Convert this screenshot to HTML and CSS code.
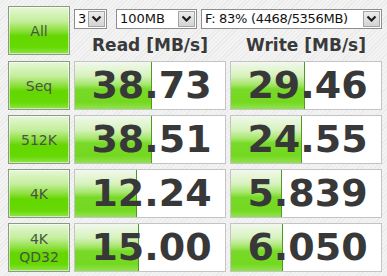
FILE: index.html
```html
<!DOCTYPE html>
<html>
<head>
<meta charset="utf-8">
<link rel="stylesheet" href="styles.css">
</head>
<body>
<div class="app">
  <div class="btn">All</div>
  <div class="top">
    <div class="selects">
      <div class="sel sel-count"><span class="sel-text">3</span><span class="arrow"><svg width="11" height="8" viewBox="0 0 11 8"><polyline points="1.5,1.5 5.5,5.5 9.5,1.5" fill="none" stroke="#1e1e1e" stroke-width="2.2"/></svg></span></div>
      <div class="sel sel-size"><span class="sel-text">100MB</span><span class="arrow"><svg width="11" height="8" viewBox="0 0 11 8"><polyline points="1.5,1.5 5.5,5.5 9.5,1.5" fill="none" stroke="#1e1e1e" stroke-width="2.2"/></svg></span></div>
      <div class="sel sel-drive"><span class="sel-text">F: 83% (4468/5356MB)</span><span class="arrow"><svg width="11" height="8" viewBox="0 0 11 8"><polyline points="1.5,1.5 5.5,5.5 9.5,1.5" fill="none" stroke="#1e1e1e" stroke-width="2.2"/></svg></span></div>
    </div>
    <div class="heads">
      <div class="head">Read [MB/s]</div>
      <div class="head">Write [MB/s]</div>
    </div>
  </div>

  <div class="btn">Seq</div>
  <div class="val" style="--w:77px">38.73</div>
  <div class="val" style="--w:74px">29.46</div>

  <div class="btn">512K</div>
  <div class="val" style="--w:77px">38.51</div>
  <div class="val" style="--w:71px">24.55</div>

  <div class="btn">4K</div>
  <div class="val" style="--w:62px">12.24</div>
  <div class="val" style="--w:51px">5.839</div>

  <div class="btn btn-two">4K<br>QD32</div>
  <div class="val" style="--w:64px">15.00</div>
  <div class="val" style="--w:52px">6.050</div>
</div>
</body>
</html>
```

FILE: styles.css
```css
html, body {
  margin: 0;
  padding: 0;
}
body {
  width: 387px;
  height: 276px;
  overflow: hidden;
  background: repeating-linear-gradient(135deg, #f3f3f3 0px, #f3f3f3 2px, #eaeaea 2px, #eaeaea 3px);
  font-family: "DejaVu Sans", Verdana, sans-serif;
}
.app {
  display: grid;
  grid-template-columns: 62px 152px 152px;
  grid-template-rows: 50px 49px 49px 49px 49px;
  column-gap: 4px;
  row-gap: 5px;
  padding: 6px 0 0 8px;
}
.btn {
  box-sizing: border-box;
  width: 62px;
  height: 49px;
  border: 1px solid #8c9a84;
  box-shadow: inset 0 0 0 1px rgba(255,255,255,0.55);
  background: linear-gradient(to bottom, #e6f7d8 0%, #c4ee9c 30%, #8ee040 50%, #64d600 62%, #66d802 85%, #8fe34a 100%);
  color: #4a5444;
  font-size: 14px;
  display: flex;
  align-items: center;
  justify-content: center;
  text-align: center;
}
.btn-two {
  line-height: 18px;
}
.top {
  grid-column: 2 / 4;
  display: flex;
  flex-direction: column;
}
.selects {
  display: flex;
  margin-top: 3px;
  height: 20px;
}
.sel {
  box-sizing: border-box;
  height: 20px;
  background: #fff;
  border: 1px solid #8e8e8e;
  display: flex;
  align-items: stretch;
  font-size: 13px;
  color: #111;
}
.sel-text {
  flex: 1;
  padding-left: 3px;
  line-height: 18px;
  white-space: nowrap;
  overflow: hidden;
}
.sel-count { width: 33px; margin-right: 9px; }
.sel-size { width: 81px; margin-right: 4px; }
.sel-drive { width: 181px; }
.sel-drive .sel-text { letter-spacing: -0.3px; }
.arrow {
  box-sizing: border-box;
  width: 17px;
  margin: 1px;
  border: 1px solid #a4a4a4;
  background: linear-gradient(to bottom, #ececec, #d4d4d4);
  display: flex;
  align-items: center;
  justify-content: center;
}
.heads {
  display: grid;
  grid-template-columns: 152px 152px;
  column-gap: 4px;
  margin-top: 6px;
}
.head {
  text-align: center;
  font-weight: bold;
  font-size: 17px;
  line-height: 20px;
  color: #3a3a3a;
}
.val {
  box-sizing: border-box;
  width: 152px;
  height: 49px;
  border: 1px solid #c4c4c4;
  background-color: #fff;
  background-image:
    linear-gradient(#4f9a22, #4f9a22),
    linear-gradient(to bottom, #f2f8ee 0%, #d6f2bc 30%, #a6e66c 48%, #78da28 58%, #74d820 85%, #92e250 100%);
  background-size: 1px 100%, var(--w) 100%;
  background-position: calc(var(--w) - 1px) 0, 0 0;
  background-repeat: no-repeat;
  font-weight: bold;
  font-size: 38px;
  line-height: 47px;
  text-align: center;
  padding-left: 3px;
  color: #383838;
}
```
